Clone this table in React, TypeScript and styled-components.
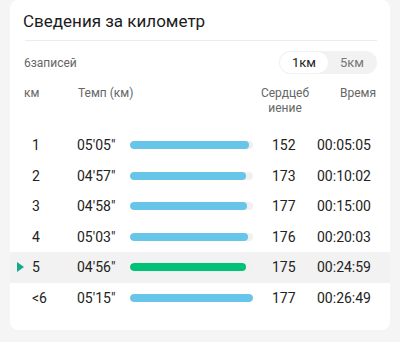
import React from "react";
import styled, { createGlobalStyle } from "styled-components";

const Global = createGlobalStyle`
  html, body { margin: 0; padding: 0; background: #f5f5f5; }
  body { font-family: Roboto, "Noto Sans", Arial, sans-serif; width: 400px; height: 342px; overflow: hidden; }
`;

const Page = styled.div`
  padding: 0 10px;
`;

const Card = styled.div`
  background: #fff;
  border-radius: 8px;
  height: 330px;
  box-sizing: border-box;
  padding-top: 11px;
`;

const Title = styled.div`
  font-size: 17px;
  color: #1c1c1c;
  line-height: 20px;
  padding: 0 13px;
`;

const Divider = styled.div`
  height: 1px;
  background: #ececec;
  margin: 9px 13px 0 15px;
`;

const SubBar = styled.div`
  display: flex;
  align-items: center;
  justify-content: space-between;
  padding: 0 13px 0 14px;
  margin-top: 10px;
`;

const Count = styled.div`
  font-size: 12px;
  color: #666;
`;

const Toggle = styled.div`
  display: flex;
  background: #f2f2f2;
  border-radius: 12px;
  height: 23px;
  width: 98px;
  padding: 1px;
  box-sizing: border-box;
`;

const ToggleItem = styled.div<{ $active?: boolean }>`
  flex: 1;
  display: flex;
  align-items: center;
  justify-content: center;
  border-radius: 11px;
  font-size: 13px;
  color: ${(p) => (p.$active ? "#222" : "#777")};
  background: ${(p) => (p.$active ? "#fff" : "transparent")};
`;

const HeadRow = styled.div`
  display: grid;
  grid-template-columns: 54px 182px 55px 1fr;
  padding-left: 14px;
  margin-top: 12px;
  font-size: 12px;
  color: #666;
  line-height: 15px;
  height: 36px;
`;

const HeadCell = styled.div<{ $center?: boolean }>`
  text-align: ${(p) => (p.$center ? "center" : "left")};
  word-break: break-all;
`;

const HrHead = styled(HeadCell)`
  width: 50px;
`;

const TimeHead = styled(HeadCell)`
  padding-left: 25px;
`;

const Rows = styled.div`
  margin-top: 8px;
`;

const Row = styled.div<{ $active?: boolean }>`
  display: grid;
  grid-template-columns: 15px 45px 53px 123px 19px 45px 1fr;
  align-items: center;
  height: 30.5px;
  padding-left: 7px;
  background: ${(p) => (p.$active ? "#f2f2f2" : "transparent")};
  font-size: 14px;
  color: #222;
`;

const Marker = styled.div`
  width: 0;
  height: 0;
  border-top: 5px solid transparent;
  border-bottom: 5px solid transparent;
  border-left: 7px solid #13a98a;
`;

const Cell = styled.div``;

const Track = styled.div`
  height: 8px;
  border-radius: 4px;
  background: #f0f0f0;
  overflow: hidden;
`;

const Fill = styled.div<{ $active?: boolean }>`
  height: 100%;
  border-radius: 4px;
  background: ${(p) => (p.$active ? "#00c277" : "#66c5e8")};
`;

const data = [
  { km: "1", pace: "05'05\"", pct: 97, hr: "152", time: "00:05:05" },
  { km: "2", pace: "04'57\"", pct: 94, hr: "173", time: "00:10:02" },
  { km: "3", pace: "04'58\"", pct: 95, hr: "177", time: "00:15:00" },
  { km: "4", pace: "05'03\"", pct: 96, hr: "176", time: "00:20:03" },
  { km: "5", pace: "04'56\"", pct: 94, hr: "175", time: "00:24:59", active: true },
  { km: "<6", pace: "05'15\"", pct: 100, hr: "177", time: "00:26:49" },
];

export default function App() {
  return (
    <>
      <Global />
      <Page>
        <Card>
          <Title>Сведения за километр</Title>
          <Divider />
          <SubBar>
            <Count>6записей</Count>
            <Toggle>
              <ToggleItem $active>1км</ToggleItem>
              <ToggleItem>5км</ToggleItem>
            </Toggle>
          </SubBar>
          <HeadRow>
            <HeadCell>км</HeadCell>
            <HeadCell>Темп (км)</HeadCell>
            <HrHead $center>Сердцебиение</HrHead>
            <TimeHead>Время</TimeHead>
          </HeadRow>
          <Rows>
            {data.map((d) => (
              <Row key={d.km} $active={d.active}>
                <Cell>{d.active ? <Marker /> : null}</Cell>
                <Cell>{d.km}</Cell>
                <Cell>{d.pace}</Cell>
                <Track>
                  <Fill $active={d.active} style={{ width: `${d.pct}%` }} />
                </Track>
                <Cell />
                <Cell>{d.hr}</Cell>
                <Cell>{d.time}</Cell>
              </Row>
            ))}
          </Rows>
        </Card>
      </Page>
    </>
  );
}
